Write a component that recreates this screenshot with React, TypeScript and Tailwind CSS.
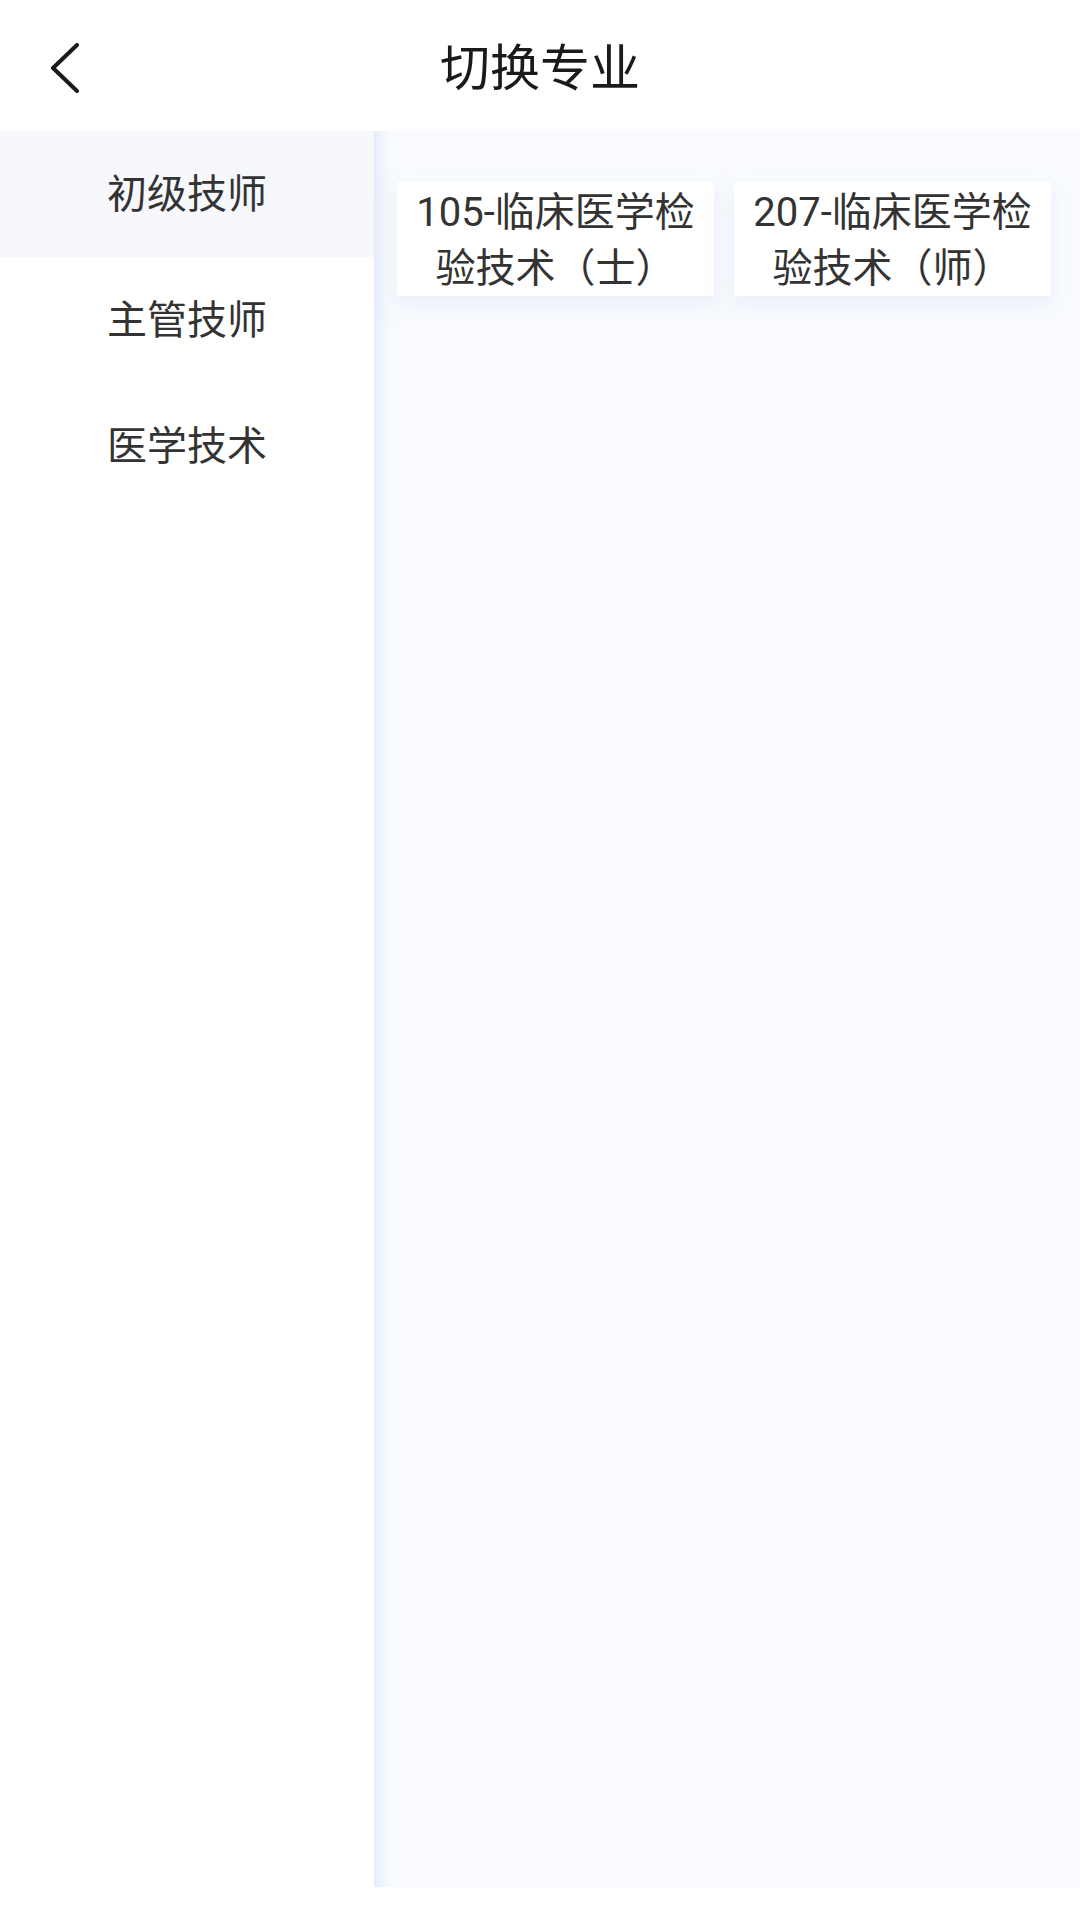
const categories = ["初级技师", "主管技师", "医学技术"];

const majors = [
  { code: "105", name: "临床医学检验技术（士）" },
  { code: "207", name: "临床医学检验技术（师）" },
];

function BackIcon() {
  return (
    <svg width="32" height="50" viewBox="0 0 32 50" fill="none">
      <path
        d="M29 2 L5 25 L29 48"
        stroke="#1a1a1a"
        strokeWidth="4"
        strokeLinecap="round"
        strokeLinejoin="round"
      />
    </svg>
  );
}

export default function App() {
  const active = 0;

  return (
    <div
      className="w-[1080px] h-[1920px] bg-white flex flex-col text-[#333]"
      style={{ fontFamily: 'Roboto, "Noto Sans CJK SC", sans-serif' }}
    >
      {/* Header */}
      <div className="h-[131px] shrink-0 flex items-center relative">
        <div className="pl-[48px] pt-[4px]">
          <BackIcon />
        </div>
        <div className="absolute inset-x-0 top-[40px] text-center text-[50px] leading-[58px] text-[#1a1a1a] pointer-events-none">
          切换专业
        </div>
      </div>

      {/* Body */}
      <div className="flex h-[1756px]">
        {/* Sidebar */}
        <div className="w-[374px] shrink-0 flex flex-col">
          {categories.map((c, i) => (
            <div
              key={c}
              className={
                "h-[126px] flex items-center justify-center text-[40px] pt-[2px] " +
                (i === active ? "bg-[#f6f8fc]" : "bg-white")
              }
            >
              {c}
            </div>
          ))}
        </div>

        {/* Majors */}
        <div className="flex-1 bg-[#f9fbfe] shadow-[inset_18px_0_16px_-14px_rgba(210,228,250,0.8)] pl-[23px] pr-[29px] pt-[51px]">
          <div className="grid grid-cols-2 gap-[20px]">
            {majors.map((m) => (
              <div
                key={m.code}
                className="bg-white h-[114px] px-[16px] pt-[3px] text-center text-[40px] leading-[56px] shadow-[0_8px_18px_rgba(215,228,245,0.5)]"
              >
                {m.code}-{m.name}
              </div>
            ))}
          </div>
        </div>
      </div>
    </div>
  );
}
